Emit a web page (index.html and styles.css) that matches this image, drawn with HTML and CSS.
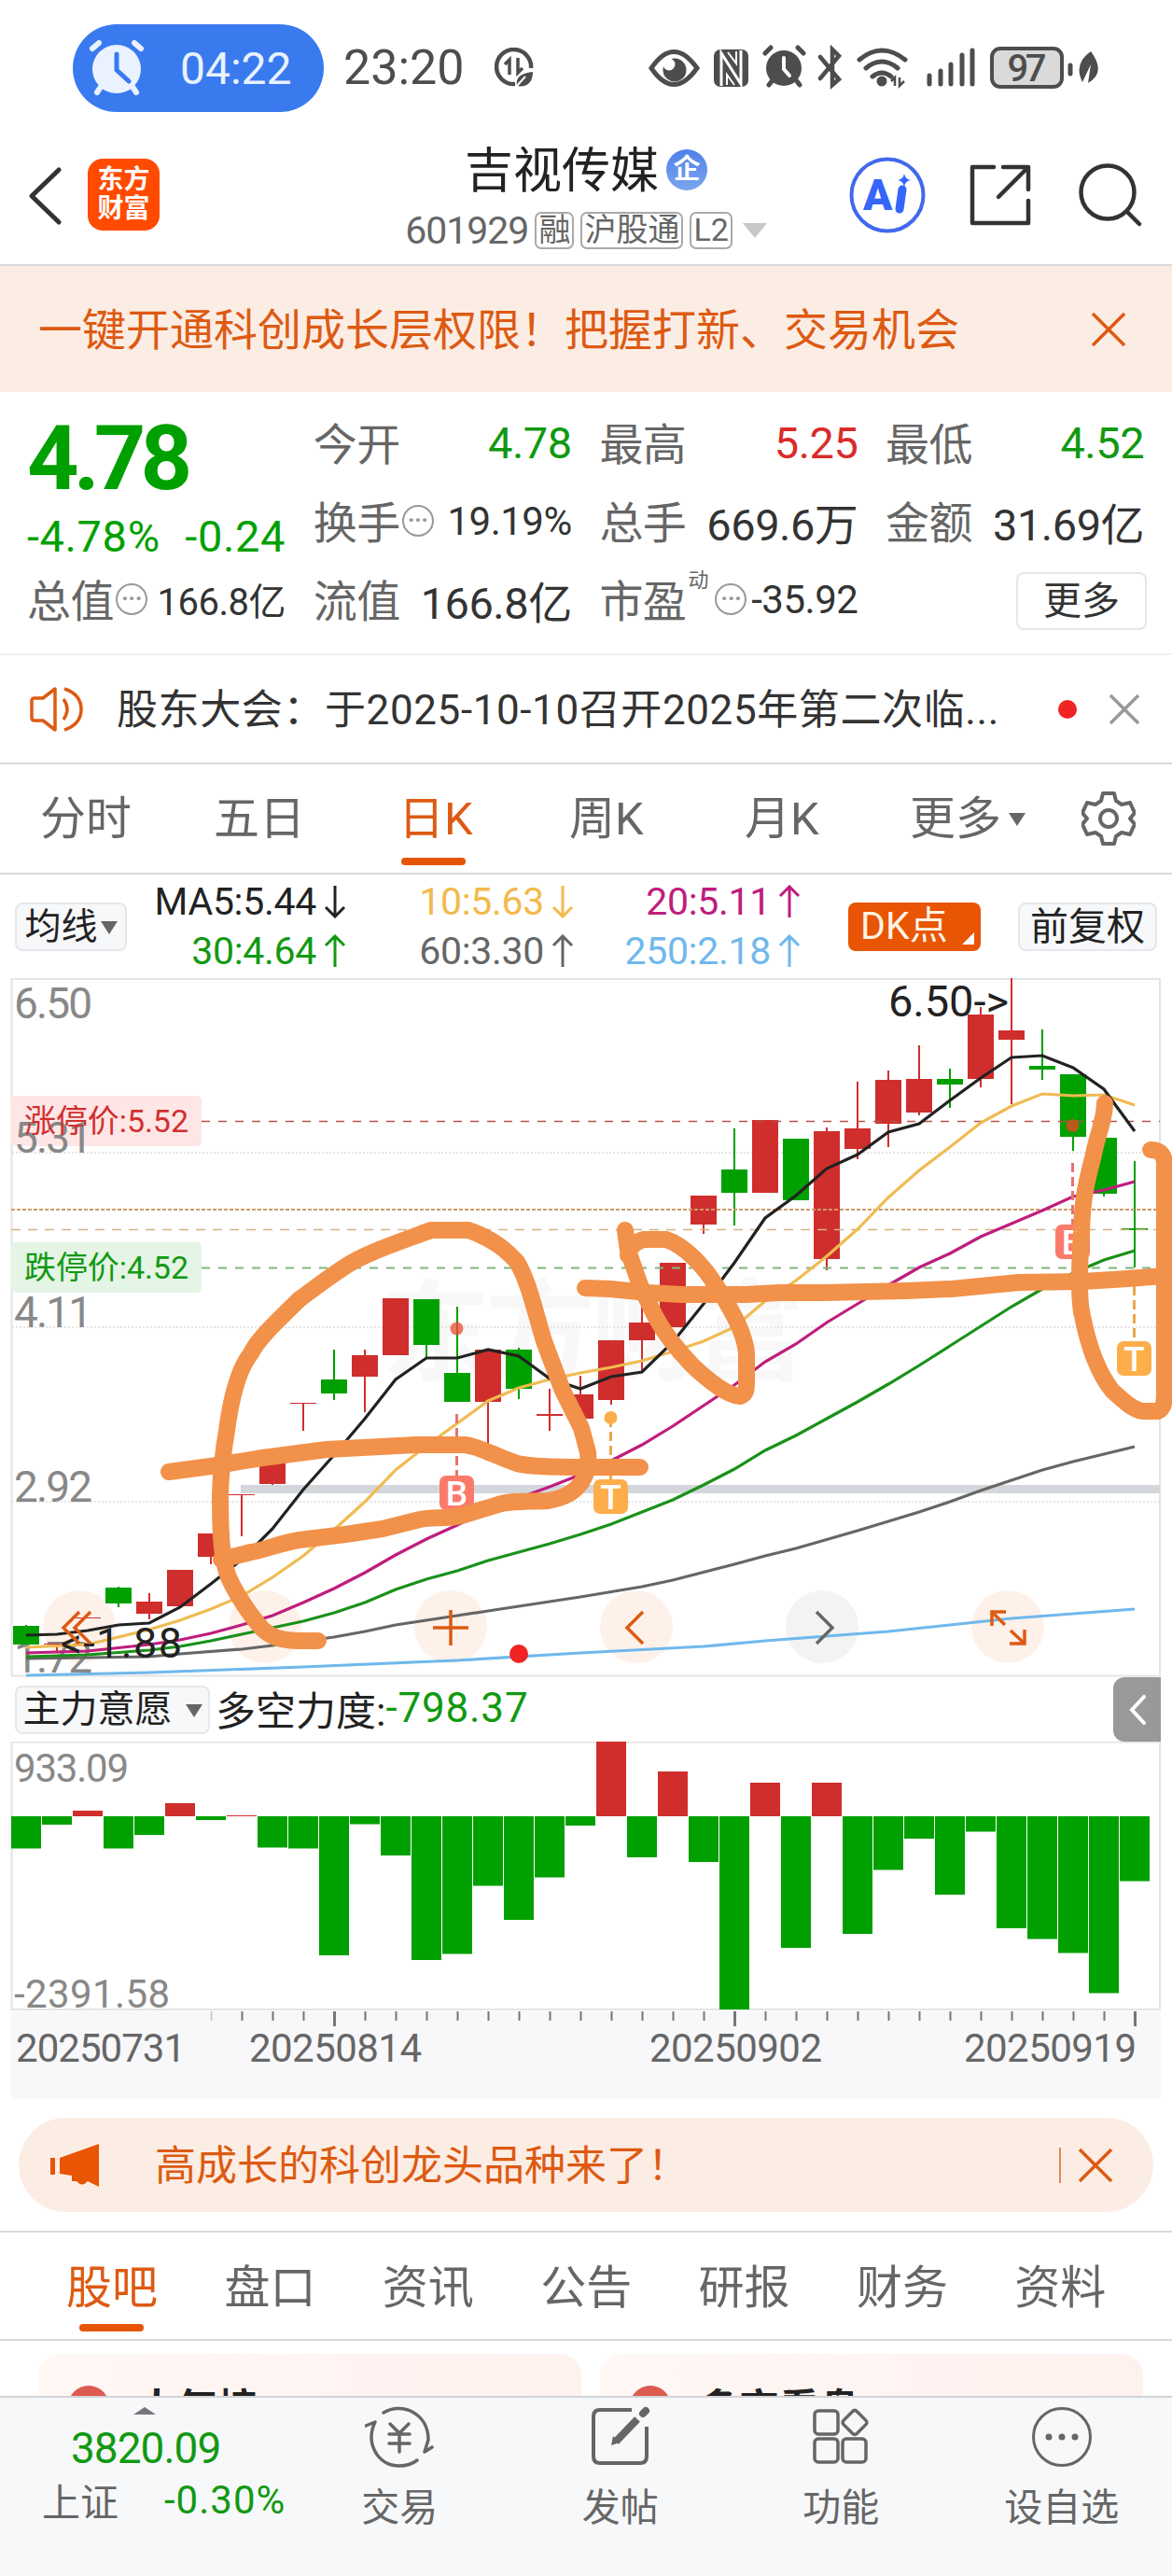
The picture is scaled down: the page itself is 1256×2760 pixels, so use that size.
FILE: index.html
```html
<!DOCTYPE html>
<html lang="zh-CN">
<head>
    <meta charset="UTF-8">
    <meta name="viewport" content="width=device-width, initial-scale=1.0">
    <title>吉视传媒 601929</title>
    <link rel="stylesheet" href="styles.css">
</head>
<body>
    <div class="status-bar">
        <div class="alarm-pill">
            <svg width="60" height="60" viewBox="0 0 60 60">
                <circle cx="30" cy="31" r="26" fill="#e9f2fe"/>
                <path d="M4 9l7-6M56 9l-7-6M9 56l4-6M51 56l-4-6" stroke="#e9f2fe" stroke-width="6" stroke-linecap="round"/>
                <path d="M30 15v17l13 12" fill="none" stroke="#397aef" stroke-width="5" stroke-linecap="round"/>
            </svg>
            <span>04:22</span>
        </div>
        <span class="clock">23:20</span>
        <svg class="saver" width="42" height="42" viewBox="0 0 42 42">
            <path d="M39 22A18.5 18.5 0 1 0 22 39" fill="none" stroke="#4d4d4d" stroke-width="4.5"/>
            <path d="M11 18l5-5v16M25 11v16l5-5" fill="none" stroke="#4d4d4d" stroke-width="3.500"/>
            <path d="M24 41c-2-10 6-14 17-15c0 12-7 17-17 15z" fill="#4d4d4d"/>
            <path d="M23 42l10-11" stroke="#fff" stroke-width="2"/>
        </svg>
        <svg class="sys-icons" width="490" height="50" viewBox="690 48 490 50">
            <g fill="none" stroke="#4d4d4d" stroke-width="5" stroke-linecap="round">
                <path d="M698 73Q722 38 747 73Q722 108 698 73z"/>
                <path d="M820 57l6-6M861 57l-6-6M824 91l3-4M857 91l-3-4"/>
                <path d="M879 61l20 24l-7 6V53l7 7l-20 24" stroke-width="4.5"/>
                <path d="M921 64q24-20 49 0M928 73q17-14 34 0M935 82q10-8 20 0"/>
                <path d="M996 90v-9M1008 90v-14M1019 90v-21M1031 90v-31M1042 90v-36"/>
                <path d="M1147 78v9" transform="translate(0 -8)"/>
            </g>
            <circle cx="723" cy="75" r="12.5" fill="#4d4d4d"/>
            <circle cx="717" cy="69" r="6.5" fill="#fff"/>
            <rect x="765" y="53" width="37" height="40" rx="7" fill="#4d4d4d"/>
            <path d="M773 92V57l21 33V54" fill="none" stroke="#fff" stroke-width="3"/>
            <path d="M780 56l9 12v-13M779 91V80l8 11" fill="none" stroke="#fff" stroke-width="2"/>
            <circle cx="840" cy="73" r="19" fill="#4d4d4d"/>
            <path d="M840 62v12l6 7" fill="none" stroke="#fff" stroke-width="4" stroke-linecap="round"/>
            <circle cx="945" cy="87" r="5.5" fill="#4d4d4d"/>
            <path d="M955 87l4-4v9M964 83v9l5-5" fill="none" stroke="#4d4d4d" stroke-width="2.5"/>
            <rect x="1063" y="52" width="75" height="41" rx="9" fill="#dadada" stroke="#4d4d4d" stroke-width="4"/>
            <text x="1100.500" y="87" font-size="40" font-weight="500" text-anchor="middle" textLength="42" fill="#4d4d4d">97</text>
            <path d="M1160 88q-10-20 9-33q17 23-3 34l3-20z" fill="#4d4d4d"/>
        </svg>
    </div>

    <header class="header">
        <svg class="back" width="36" height="62" viewBox="0 0 36 62"><path d="M33 3L4 31l29 28" fill="none" stroke="#333" stroke-width="5" stroke-linecap="round" stroke-linejoin="round"/></svg>
        <div class="logo"><span>东方</span><span>财富</span></div>
        <div class="title">
            <div class="name">吉视传媒<span class="corp">企</span></div>
            <div class="code"><span>601929</span><i>融</i><i>沪股通</i><i>L2</i><b class="tri"></b></div>
        </div>
        <svg class="ai" width="82" height="82" viewBox="0 0 82 82">
            <circle cx="41" cy="41" r="38.500" fill="none" stroke="#4168ee" stroke-width="4"/>
            <text x="15" y="57" font-size="46" font-weight="900" fill="#3565fa">A</text>
            <path d="M57 35l-3 21" stroke="#3565fa" stroke-width="9" stroke-linecap="round"/>
            <path d="M59 18q1 6 7 7q-6 1-7 7q-1-6-7-7q6-1 7-7z" fill="#3565fa"/>
        </svg>
        <svg class="share" width="66" height="66" viewBox="0 0 66 66">
            <path d="M26 3H3v60h60V39M36 3h27v24M61 5L31 35" fill="none" stroke="#333" stroke-width="4.500" stroke-linecap="round" stroke-linejoin="round"/>
        </svg>
        <svg class="search" width="68" height="68" viewBox="0 0 68 68">
            <circle cx="31" cy="31" r="28.500" fill="none" stroke="#333" stroke-width="4.500"/>
            <path d="M52 52l13 13" stroke="#333" stroke-width="4.500" stroke-linecap="round"/>
        </svg>
    </header>

    <div class="banner">
        <span>一键开通科创成长层权限！把握打新、交易机会</span>
        <svg width="38" height="38" viewBox="0 0 38 38"><path d="M2 2l34 34M36 2L2 36" stroke="#dd5a12" stroke-width="3.500"/></svg>
    </div>

    <section class="quote">
        <div class="price">
            <div class="now">4.78</div>
            <div class="change"><span>-4.78%</span><span>-0.24</span></div>
        </div>
        <div class="cell"><label>今开</label><span class="down">4.78</span></div>
        <div class="cell"><label>最高</label><span class="up">5.25</span></div>
        <div class="cell"><label>最低</label><span class="down">4.52</span></div>
        <div class="cell"><label>换手</label><i class="info">···</i><span class="small">19.19%</span></div>
        <div class="cell"><label>总手</label><span>669.6万</span></div>
        <div class="cell"><label>金额</label><span>31.69亿</span></div>
        <div class="cell"><label>总值</label><i class="info">···</i><span class="small cap">166.8亿</span></div>
        <div class="cell"><label>流值</label><span>166.8亿</span></div>
        <div class="cell"><label>市盈</label><sup>动</sup><i class="info">···</i><span class="small">-35.92</span></div>
        <div class="cell"><button class="more">更多</button></div>
    </section>

    <div class="notice">
        <svg width="60" height="50" viewBox="0 0 60 50">
            <g fill="none" stroke="#dd5a12" stroke-width="3.500" stroke-linejoin="round">
                <path d="M27 3v44L14 37H5q-3 0-3-3V16q0-3 3-3h9z"/>
                <path d="M36 14q8 11 0 22M37 3q18 6 18 22T37 47"/>
            </g>
        </svg>
        <span class="text">股东大会：于2025-10-10召开2025年第二次临...</span>
        <b class="dot"></b>
        <svg width="34" height="34" viewBox="0 0 34 34"><path d="M2 2l30 30M32 2L2 32" stroke="#999" stroke-width="3.500"/></svg>
    </div>

    <nav class="period-tabs">
        <span>分时</span><span>五日</span><span class="active">日K</span><span>周K</span><span>月K</span><span>更多<b class="tri"></b></span>
        <svg width="58" height="58" viewBox="0 0 58 58">
            <path d="M23 2h12l2 8l6 4l9-2l5 11l-5 6l5 6l-5 11l-9-2l-6 4l-2 8H23l-2-8l-6-4l-9 2l-5-11l5-6l-5-6l5-11l9 2l6-4z" fill="none" stroke="#666" stroke-width="4" stroke-linejoin="round"/>
            <circle cx="29" cy="29" r="9" fill="none" stroke="#666" stroke-width="4"/>
        </svg>
    </nav>

    <div class="ma-bar">
        <button class="chip ma-chip">均线<b class="tri"></b></button>
        <div class="ma-list">
            <span class="ma5">MA5:5.44<svg class="arrow" viewBox="0 0 24 36"><path d="M12 1v33M2 24l10 10l10-10"/></svg></span>
            <span class="ma10">10:5.63<svg class="arrow" viewBox="0 0 24 36"><path d="M12 1v33M2 24l10 10l10-10"/></svg></span>
            <span class="ma20">20:5.11<svg class="arrow" viewBox="0 0 24 36"><path d="M12 35V2M2 12L12 2l10 10"/></svg></span>
            <span class="ma30">30:4.64<svg class="arrow" viewBox="0 0 24 36"><path d="M12 35V2M2 12L12 2l10 10"/></svg></span>
            <span class="ma60">60:3.30<svg class="arrow" viewBox="0 0 24 36"><path d="M12 35V2M2 12L12 2l10 10"/></svg></span>
            <span class="ma250">250:2.18<svg class="arrow" viewBox="0 0 24 36"><path d="M12 35V2M2 12L12 2l10 10"/></svg></span>
        </div>
        <button class="chip dk">DK点</button>
        <button class="chip">前复权</button>
    </div>

    <svg class="k-chart" width="1256" height="749" viewBox="0 1048 1256 749">
        <text x="408" y="1470" class="watermark" textLength="455">东方财富</text>
        <path d="M12.500 1049H1243V1795.500H12.500z" fill="none" stroke="#e4e4e4" stroke-width="2"/>
        <path d="M13 1235H1243M13 1422H1243M13 1609H1243" stroke="#ddd" stroke-width="1.500" stroke-dasharray="2 2"/>
        <g fill="#fef1ea">
            <circle cx="85" cy="1743" r="39"/><circle cx="284" cy="1743" r="39"/><circle cx="483" cy="1743" r="39"/>
            <circle cx="682" cy="1743" r="39"/><circle cx="881" cy="1743" r="39" fill="#f3f3f3"/><circle cx="1080" cy="1743" r="39"/>
        </g>
        <rect x="258" y="1591" width="985" height="9" fill="#d3d7db"/>
        <rect x="12" y="1174" width="204" height="54" rx="5" fill="#fee6e6"/>
        <rect x="12" y="1331" width="204" height="54" rx="5" fill="#e4f4e5"/>
        <g class="axis-label">
            <text x="15" y="1091" textLength="84">6.50</text>
            <text x="15" y="1235" textLength="84">5.31</text>
            <text x="15" y="1422" textLength="84">4.11</text>
            <text x="15" y="1609" textLength="84">2.92</text>
            <text x="15" y="1792" textLength="84">1.72</text>
        </g>
        <text x="26" y="1213" font-size="34" textLength="176" fill="#d22f2f">涨停价:5.52</text>
        <text x="26" y="1370" font-size="34" textLength="176" fill="#119911">跌停价:4.52</text>
        <g id="candles"></g>
        <path d="M216 1201.500H1243" stroke="#b9504e" stroke-width="1.500" stroke-dasharray="9 9"/>
        <path d="M216 1358.500H1243" stroke="#7fb67f" stroke-width="1.800" stroke-dasharray="9 9"/>
        <path d="M12 1296H1243" stroke="#cd9a6c" stroke-width="2" stroke-dasharray="4 2"/>
        <path d="M12 1317.500H1243" stroke="#d9b184" stroke-width="1.500" stroke-dasharray="10 8"/>
        <g id="lines" fill="none" stroke-width="3.200"></g>
        <g fill="none" stroke-width="3" stroke-dasharray="10 5">
            <path d="M489.500 1515V1581M1149.500 1246V1312" stroke="#e5746c"/>
            <path d="M654.500 1519V1585M1215.500 1378V1436" stroke="#eba74a"/>
        </g>
        <circle cx="489.500" cy="1423.500" r="7" fill="#f04a36" opacity=".75"/>
        <circle cx="1149.500" cy="1206" r="7" fill="#b5591c"/>
        <circle cx="654.500" cy="1519" r="7" fill="#fcae4a"/>
        <g class="marks">
            <rect x="471" y="1581" width="37" height="37" rx="7" fill="#fb7b6b"/><text x="489.500" y="1613">B</text>
            <rect x="1131" y="1312" width="37" height="37" rx="7" fill="#fb7b6b"/><text x="1149.500" y="1344">B</text>
            <rect x="636" y="1585" width="37" height="37" rx="7" fill="#fdae4b"/><text x="654.500" y="1617">T</text>
            <rect x="1197" y="1437" width="37" height="37" rx="7" fill="#fdae4b"/><text x="1215.500" y="1469">T</text>
        </g>
        <text x="952" y="1089" font-size="47" textLength="129" fill="#222">6.50-&gt;</text>
        <text x="65" y="1776" font-size="45" textLength="130" fill="#222">&lt;-1.88</text>
        <g fill="none" stroke="#dd5a12" stroke-width="3.500">
            <path d="M85 1727L68 1744L85 1761M97 1727L80 1744L97 1761"/>
            <path d="M464 1744H502M483 1725V1763"/>
            <path d="M689 1727L672 1744L689 1761"/>
            <path d="M875 1727L892 1744L875 1761" stroke="#666"/>
            <path d="M1063 1742V1727H1078M1064 1728L1077 1741M1098 1746V1761H1082M1097 1760L1083 1747"/>
        </g>
        <circle cx="556" cy="1772" r="10" fill="#f12323"/>
        <!-- hand drawn marks -->
        <g class="pen">
            <path d="M341 1758H318C300 1757 290 1754 281 1745C270 1733 254 1710 245 1690C238 1672 236 1650 236 1600C237 1570 240 1550 243 1533C246 1510 253 1470 269 1450C275 1437 290 1422 321 1392C340 1378 350 1370 370 1357C390 1343 430 1330 462 1318H502C530 1328 543 1340 554 1352C566 1372 572 1400 583 1437L603 1490L623 1530L630 1556C632 1575 626 1602 587 1608C560 1609 545 1608 534 1612L498 1623C480 1628 465 1625 450 1628L410 1638L370 1644L321 1650C300 1653 280 1662 269 1663L237 1671"/>
            <path d="M181 1577L233 1570L281 1562L350 1553L446 1548H498C515 1550 530 1560 554 1568C565 1571 590 1572 628 1572H686"/>
            <path d="M627 1380L654 1381L694 1385L730 1387H799L835 1385H883L971 1383L1020 1381L1092 1374L1160 1373L1209 1370L1247 1367"/>
            <path d="M670 1318L673 1340L686 1377L702 1410C710 1425 720 1440 742 1463C760 1480 780 1495 793 1496C800 1494 800 1488 800 1480V1450C799 1435 789 1410 767 1377C755 1358 735 1335 714 1328H690C682 1330 674 1336 673 1345"/>
            <path d="M1184 1182C1184 1200 1176 1215 1172 1237C1165 1265 1160 1280 1159 1320C1157 1350 1155 1390 1160 1410C1164 1430 1172 1465 1192 1490C1205 1502 1215 1511 1225 1512H1241C1248 1509 1248 1500 1248 1490V1245C1247 1236 1242 1232 1233 1232"/>
        </g>
    </svg>

    <div class="sub-head">
        <button class="chip will">主力意愿<b class="tri"></b></button>
        <span class="force">多空力度:</span><span class="force-val">-798.37</span>
        <span class="fold"><svg width="20" height="32" viewBox="0 0 20 32"><path d="M17 2L4 16l13 14" fill="none" stroke="#fff" stroke-width="4" stroke-linecap="round"/></svg></span>
    </div>

    <svg class="vol-chart" width="1256" height="383" viewBox="0 1866 1256 383">
        <rect x="12" y="2155" width="1232" height="94" fill="#f8f8fb"/>
        <path d="M12.500 1866.500H1243V2153H12.500z" fill="none" stroke="#e4e4e4" stroke-width="2"/>
        <g id="bars"></g>
        <g class="vol-label">
            <text x="15" y="1909" textLength="123">933.09</text>
            <text x="15" y="2151" textLength="167">-2391.58</text>
        </g>
        <g class="date-label">
            <text x="17" y="2209" textLength="182">20250731</text>
            <text x="267" y="2209" textLength="185">20250814</text>
            <text x="696" y="2209" textLength="185">20250902</text>
            <text x="1033" y="2209" textLength="185">20250919</text>
        </g>
    </svg>

    <div class="promo">
        <svg width="53" height="46" viewBox="0 0 53 46"><path d="M0 15h5v18H0zM10 15L52 0v46L40 40q-6 7-12 0l-5 0v-6l-13-2z" fill="#e85505"/></svg>
        <span>高成长的科创龙头品种来了！</span>
        <svg class="close" width="38" height="38" viewBox="0 0 38 38"><path d="M2 2l34 34M36 2L2 36" stroke="#dd5a12" stroke-width="3.500"/></svg>
    </div>

    <nav class="info-tabs">
        <span class="active">股吧</span><span>盘口</span><span>资讯</span><span>公告</span><span>研报</span><span>财务</span><span>资料</span>
    </nav>

    <div class="cards">
        <div class="card"><b class="badge"></b>人气榜</div>
        <div class="card"><b class="badge"></b>多空看盘</div>
    </div>

    <footer class="bottom-nav">
        <div class="index">
            <b class="tri-up"></b>
            <div class="point">3820.09</div>
            <div class="row"><span>上证</span><span class="rate">-0.30%</span></div>
        </div>
        <div class="item">
            <svg width="74" height="66" viewBox="0 0 74 66">
                <g fill="none" stroke="#666" stroke-width="3.500" stroke-linecap="round" stroke-linejoin="round">
                    <path d="M20 7C40-5 68 8 68 36L64 49l8-5M1 21l10-4C0 40 14 64 37 64q11 0 19-6"/>
                    <path d="M27 19l10 10l10-10M26 30h22M26 40h22M37 29v20"/>
                </g>
            </svg>
            <span>交易</span>
        </div>
        <div class="item">
            <svg width="64" height="66" viewBox="0 0 64 66">
                <path d="M44 4H10Q3 4 3 11v43q0 7 7 7h43q7 0 7-7V22" fill="none" stroke="#666" stroke-width="4"/>
                <path d="M27 38L50 14" stroke="#666" stroke-width="8"/>
                <path d="M22 42l2-10l7 7z" fill="#666"/>
                <path d="M56 8l3-3" stroke="#666" stroke-width="8" stroke-linecap="round"/>
            </svg>
            <span>发帖</span>
        </div>
        <div class="item">
            <svg width="60" height="66" viewBox="0 0 60 66">
                <g fill="none" stroke="#666" stroke-width="3.500">
                    <rect x="2" y="5" width="25" height="25" rx="4"/><rect x="2" y="35" width="25" height="25" rx="4"/><rect x="32" y="35" width="25" height="25" rx="4"/>
                    <rect x="35" y="7.500" width="20" height="20" rx="3" transform="rotate(45 45 17.500)"/>
                </g>
            </svg>
            <span>功能</span>
        </div>
        <div class="item">
            <svg width="66" height="66" viewBox="0 0 66 66">
                <circle cx="33" cy="33" r="30.500" fill="none" stroke="#666" stroke-width="3"/>
                <g fill="#666"><circle cx="19" cy="33" r="3.500"/><circle cx="33" cy="33" r="3.500"/><circle cx="47" cy="33" r="3.500"/></g>
            </svg>
            <span>设自选</span>
        </div>
    </footer>

    <script src="chart.js"></script>
</body>
</html>
```

FILE: styles.css
```css
* {
    box-sizing: border-box;
}
body {
    margin: 0;
    width: 1256px;
    height: 2760px;
    overflow: hidden;
    background: #fff;
    color: #333;
    font-family: Roboto, "Noto Sans CJK SC", sans-serif;
}
svg {
    display: block;
    flex: none;
}
svg text {
    font-family: Roboto, "Noto Sans CJK SC", sans-serif;
}
button {
    font-family: inherit;
    padding: 0;
}
i {
    font-style: normal;
}
.tri {
    display: inline-block;
    border: 9px solid transparent;
    border-top: 14px solid #666;
    border-bottom: 0;
}

/* status bar */
.status-bar {
    height: 136px;
    padding: 26px 76px 16px 78px;
    display: flex;
    align-items: flex-start;
}
.alarm-pill {
    width: 269px;
    height: 94px;
    border-radius: 47px;
    background: #397aef;
    color: #e9f2fe;
    display: flex;
    align-items: center;
    padding-left: 17px;
    font-size: 48px;
}
.alarm-pill span {
    margin-left: 38px;
}
.clock {
    margin-left: 21px;
    line-height: 94px;
    font-size: 52px;
    color: #4d4d4d;
}
.saver {
    margin: 25px 0 0 32px;
}
.sys-icons {
    margin: 22px 0 0 auto;
}

/* header */
.header {
    height: 149px;
    padding-left: 30px;
    display: flex;
    align-items: flex-start;
    border-bottom: 2px solid #d9d9dc;
}
.back {
    margin-top: 43px;
}
.logo {
    width: 77px;
    height: 77px;
    margin: 34px 0 0 28px;
    border-radius: 16px;
    background: #ff4a00;
    color: #fff;
    font-size: 28px;
    font-weight: 700;
    line-height: 31px;
    padding-top: 7px;
    text-align: center;
}
.logo span {
    display: block;
}
.title {
    width: 400px;
    margin-left: 257px;
}
.name {
    height: 85px;
    display: flex;
    align-items: center;
    justify-content: center;
    gap: 8px;
    font-size: 52px;
    color: #222;
    white-space: nowrap;
}
.corp {
    width: 44px;
    height: 44px;
    margin-top: 6px;
    border-radius: 50%;
    background: linear-gradient(#4f80e8, #7ba6ee);
    color: #fff;
    font-size: 29px;
    font-weight: 700;
    line-height: 42px;
    text-align: center;
}
.code {
    height: 52px;
    display: flex;
    align-items: center;
    justify-content: center;
    gap: 7px;
    font-size: 41px;
    color: #666;
    letter-spacing: -1px;
}
.code i {
    height: 40px;
    padding: 0 2px;
    border: 2px solid #aaa;
    border-radius: 7px;
    font-size: 34px;
    line-height: 35px;
    letter-spacing: 0;
}
.code .tri {
    margin-left: 4px;
    border-width: 16px 13px 0;
    border-top-color: #c8c8c8;
}
.ai {
    margin: 32px 0 0 82px;
}
.share {
    margin: 40px 0 0 47px;
}
.search {
    margin: 39px 0 0 51px;
}

/* permission banner */
.banner {
    height: 135px;
    padding: 0 49px 0 41px;
    display: flex;
    align-items: center;
    justify-content: space-between;
    background: #fcede4;
    color: #dd5a12;
    font-size: 47px;
    white-space: nowrap;
}
.banner span {
    margin-top: -6px;
}

/* quote grid */
.quote {
    height: 280px;
    padding: 12px 30px 0 29px;
    display: grid;
    grid-template-columns: repeat(4, 277px);
    grid-template-rows: repeat(3, 84px);
    column-gap: 29.7px;
    font-size: 47px;
}
.price {
    grid-row: span 2;
    padding-top: 2px;
    color: #00a000;
}
.now {
    height: 112px;
    line-height: 114px;
    font-size: 97px;
    font-weight: 700;
    letter-spacing: -6px;
}
.change {
    display: flex;
    justify-content: space-between;
    line-height: 58px;
    font-size: 47px;
    letter-spacing: 0.6px;
}
.cell {
    position: relative;
    display: flex;
    align-items: center;
    white-space: nowrap;
    letter-spacing: -0.5px;
}
.cell label {
    color: #666;
    margin-top: -3px;
}
.cell span {
    margin-left: auto;
}
.cell .small {
    font-size: 42px;
}
.cell .cap {
    font-size: 40px;
}
.cell .down {
    color: #119911;
}
.up {
    color: #d82c2c;
}
.info {
    width: 34px;
    height: 34px;
    margin-left: 2px;
    border: 2px solid #999;
    border-radius: 50%;
    color: #999;
    font-size: 26px;
    font-weight: 700;
    line-height: 28px;
    text-align: center;
}
.cell sup {
    width: 24px;
    margin: 0 3px 0 2px;
    align-self: flex-start;
    font-size: 22px;
    line-height: 24px;
    padding-top: 10px;
    color: #666;
}
.more {
    width: 140px;
    height: 62px;
    margin: 3px -3px 0 auto;
    border: 2px solid #e6e6e6;
    border-radius: 8px;
    background: #fff;
    color: #333;
    font-size: 41px;
    line-height: 54px;
}

/* notice */
.notice {
    height: 119px;
    padding: 0 34px 0 32px;
    display: flex;
    align-items: center;
    border-top: 2px solid #efefef;
    border-bottom: 2px solid #d9d9d9;
}
.notice .text {
    margin: -5px 0 0 33px;
    width: 1009px;
    font-size: 44px;
    letter-spacing: 0.6px;
    white-space: nowrap;
}
.dot {
    width: 20px;
    height: 20px;
    border-radius: 50%;
    background: #f12323;
    margin-right: auto;
}

/* tabs */
.period-tabs {
    height: 118px;
    padding: 0 39px 0 43px;
    display: flex;
    align-items: center;
    border-bottom: 2px solid #d9d9d9;
    font-size: 49px;
    color: #666;
}
.period-tabs span {
    position: relative;
    width: 186px;
    height: 116px;
    line-height: 118px;
    white-space: nowrap;
}
.period-tabs span:nth-child(3) {
    width: 181px;
    padding-left: 13px;
    margin-right: -1px;
}
.period-tabs span:nth-child(2) {
    width: 185px;
}
.period-tabs span:nth-child(4) {
    padding-left: 16px;
    width: 188px;
}
.period-tabs span:nth-child(5) {
    padding-left: 16px;
}
.period-tabs span:nth-child(6) {
    padding-left: 7px;
}
.period-tabs svg {
    margin-left: auto;
}
.period-tabs .tri {
    margin: 0 0 9px 8px;
}
.period-tabs .active, .info-tabs .active {
    color: #dd5a12;
}
.active::after {
    content: "";
    position: absolute;
    left: 16px;
    bottom: 8px;
    width: 69px;
    height: 8px;
    border-radius: 4px;
    background: #e65505;
}

/* moving averages */
.ma-bar {
    height: 111px;
    padding: 0 16px;
    display: flex;
    align-items: center;
}
.chip {
    flex: none;
    height: 52px;
    width: 149px;
    border: 2px solid #e6e7ea;
    border-radius: 8px;
    background: #f7f8fa;
    color: #222;
    font-size: 41px;
    line-height: 44px;
    white-space: nowrap;
}
.ma-chip {
    width: 120px;
    font-size: 39px;
}
.ma-chip .tri {
    margin: 0 0 5px 3px;
}
.ma-list {
    display: grid;
    grid-template-columns: 235px 244px 243px;
    grid-template-rows: 53px 53px;
    font-size: 41px;
    letter-spacing: -0.3px;
    padding-bottom: 1px;
}
.ma-list span {
    display: flex;
    align-items: center;
    justify-content: flex-end;
    gap: 8px;
}
.arrow {
    width: 24px;
    height: 36px;
    fill: none;
    stroke: currentColor;
    stroke-width: 3;
}
.ma5 { color: #222; }
.ma10 { color: #f3b94b; }
.ma20 { color: #bf1d7d; }
.ma30 { color: #119911; }
.ma60 { color: #666; }
.ma250 { color: #70b8ec; }
.dk {
    position: relative;
    width: 142px;
    margin: 0 40px 0 51px;
    border: 0;
    background: #e85505;
    color: #fff3e2;
    text-align: left;
    padding-left: 13px;
    line-height: 47px;
}
.dk::after {
    content: "";
    position: absolute;
    right: 7px;
    bottom: 7px;
    border-left: 13px solid transparent;
    border-bottom: 13px solid #fff;
}

/* charts */
.watermark {
    font-size: 118px;
    font-weight: 700;
    fill: #f8f8f8;
}
.axis-label {
    font-size: 46px;
    fill: #888;
}
.vol-label {
    font-size: 42px;
    fill: #888;
}
.date-label {
    font-size: 42px;
    fill: #666;
}
.marks text {
    font-size: 37px;
    font-weight: 500;
    fill: #fff;
    text-anchor: middle;
}
.pen {
    fill: none;
    stroke: #f2914a;
    stroke-width: 18;
    stroke-linecap: round;
    stroke-linejoin: round;
}
.sub-head {
    height: 69px;
    padding: 0 12px 0 16px;
    display: flex;
    align-items: center;
    font-size: 43px;
}
.will {
    width: 209px;
    font-size: 40px;
}
.will .tri {
    margin: 0 0 5px 14px;
}
.force {
    margin: -4px 0 0 6px;
    color: #222;
}
.force-val {
    color: #119911;
    letter-spacing: 0.8px;
    font-size: 44px;
    margin-top: -3px;
}
.fold {
    width: 51px;
    height: 69px;
    margin-left: auto;
    border-radius: 12px 0 0 12px;
    background: #999;
    display: flex;
    align-items: center;
    justify-content: center;
}

/* promo */
.promo {
    height: 101px;
    margin: 20px 20px 20px;
    padding: 0 43px 0 34px;
    border-radius: 51px;
    background: #fcede4;
    color: #dd5a12;
    font-size: 44px;
    display: flex;
    align-items: center;
}
.promo span {
    margin: -5px 0 0 59px;
}
.promo .close {
    box-sizing: content-box;
    margin-left: auto;
    padding-left: 18px;
    border-left: 2px solid #dd8a5a;
}
.info-tabs {
    height: 118px;
    padding: 0 71px;
    border-top: 2px solid #d9d9d9;
    border-bottom: 2px solid #d9d9d9;
    display: flex;
    font-size: 49px;
    color: #666;
}
.info-tabs span {
    position: relative;
    flex: 0 0 169.4px;
    line-height: 119px;
}
.info-tabs .active::after {
    left: 14px;
}

.cards {
    height: 59px;
    padding: 14px 31px 0 41px;
    display: flex;
    gap: 20px;
    overflow: hidden;
}
.card {
    width: 582px;
    height: 130px;
    padding: 34px 0 0 32px;
    border-radius: 24px;
    background: linear-gradient(90deg, #fff8f5, #fef1ee);
    color: #222;
    display: flex;
    align-items: flex-start;
    font-size: 43px;
    font-weight: 700;
    line-height: 50px;
}
.badge {
    width: 44px;
    height: 44px;
    margin: 0 30px 0 0;
    border-radius: 50%;
    background: #dc5a50;
}

/* bottom nav */
.bottom-nav {
    height: 194px;
    border-top: 2px solid #d2d3d8;
    background: #f7f8fa;
    display: flex;
    color: #666;
    font-size: 41px;
}
.index {
    width: 310px;
    padding-top: 10px;
}
.tri-up {
    display: block;
    width: 0;
    margin-left: 143px;
    border: 12px solid transparent;
    border-top: 0;
    border-bottom: 8px solid #77777b;
}
.point {
    padding-left: 76px;
    font-size: 46px;
    line-height: 54px;
    margin-top: 9px;
    color: #119911;
    letter-spacing: -1px;
}
.row {
    display: flex;
    align-items: center;
    height: 56px;
    padding-left: 45px;
}
.rate {
    margin-left: 49px;
    font-size: 42px;
    letter-spacing: 1px;
    color: #119911;
}
.item {
    flex: 0 0 236.500px;
    display: flex;
    flex-direction: column;
    align-items: center;
    padding-top: 9px;
}
.item span {
    margin-top: 13px;
    line-height: 60px;
}
```

FILE: chart.js
```js
// [up, high, open/close top, open/close bottom, low]
const candles = [
    [0, 1741, 1742, 1762, 1762], [1, 1761, 1761, 1762, 1770], [1, 1733, 1733, 1734, 1734], [0, 1700, 1701, 1718, 1722],
    [1, 1707, 1716, 1729, 1735], [1, 1682, 1682, 1721, 1721], [1, 1643, 1643, 1668, 1676], [1, 1601, 1601, 1602, 1646],
    [1, 1565, 1565, 1590, 1591], [1, 1503, 1503, 1504, 1533], [0, 1446, 1478, 1493, 1500], [1, 1446, 1452, 1475, 1513],
    [1, 1391, 1391, 1452, 1452], [0, 1392, 1392, 1441, 1455], [0, 1400, 1471, 1502, 1502], [1, 1446, 1446, 1502, 1547],
    [0, 1444, 1446, 1488, 1499], [1, 1488, 1515, 1517, 1533], [1, 1474, 1494, 1520, 1520], [1, 1436, 1436, 1500, 1505],
    [1, 1398, 1417, 1436, 1470], [1, 1353, 1353, 1422, 1422], [1, 1281, 1281, 1312, 1322], [0, 1209, 1253, 1278, 1313],
    [1, 1200, 1200, 1278, 1278], [0, 1220, 1220, 1286, 1286], [1, 1208, 1212, 1349, 1361], [1, 1159, 1209, 1231, 1242],
    [1, 1147, 1157, 1204, 1229], [1, 1120, 1156, 1192, 1195], [0, 1145, 1156, 1162, 1187], [1, 1079, 1087, 1156, 1165],
    [1, 1048, 1104, 1114, 1183], [0, 1103, 1142, 1146, 1157], [0, 1151, 1151, 1218, 1233], [0, 1218, 1219, 1279, 1282],
    [0, 1244, 1316, 1318, 1358]
];

const averages = {
    '#70b8ec': '28,1795 160,1792 325,1786 490,1779 622,1771 754,1764 820,1758 886,1753 952,1748 1018,1741 1084,1734 1150,1729 1216,1724',
    '#666': '28,1777 94,1776 160,1775 193,1772 259,1767 292,1763 358,1754 391,1748 424,1741 490,1731 523,1726 589,1716 622,1711 688,1700 721,1693 787,1676 820,1667 853,1659 919,1640 985,1620 1018,1609 1051,1597 1084,1586 1117,1575 1150,1566 1216,1550',
    '#1a911a': '28,1775 94,1773 160,1768 193,1764 226,1758 259,1751 292,1744 325,1737 358,1728 391,1717 424,1703 457,1692 490,1683 523,1672 556,1663 589,1654 622,1644 655,1633 688,1620 721,1607 754,1591 787,1574 820,1554 853,1538 886,1520 919,1502 952,1483 985,1463 1018,1442 1051,1421 1084,1400 1117,1381 1150,1364 1183,1350 1216,1340',
    '#bf1d7d': '28,1771 94,1769 160,1762 193,1757 226,1750 259,1741 292,1731 325,1717 358,1702 391,1685 424,1666 457,1649 490,1634 523,1618 556,1605 589,1593 622,1580 655,1565 688,1548 721,1528 754,1506 787,1484 820,1459 853,1440 886,1417 919,1397 952,1377 985,1358 1018,1343 1051,1325 1084,1311 1117,1297 1150,1282 1183,1275 1216,1266',
    '#f0bb51': '28,1765 94,1762 127,1754 160,1746 193,1736 226,1724 259,1710 292,1690 325,1667 358,1639 391,1609 424,1575 457,1549 490,1525 523,1501 556,1487 589,1478 622,1471 655,1465 688,1458 721,1448 754,1437 787,1422 820,1394 853,1372 886,1346 919,1317 952,1283 985,1254 1018,1229 1051,1203 1084,1185 1117,1172 1150,1174 1183,1173 1216,1184',
    '#222': '28,1752 61,1751 94,1747 127,1741 160,1739 193,1722 226,1697 259,1671 292,1638 325,1596 358,1559 391,1520 424,1478 457,1455 490,1455 523,1446 556,1453 589,1477 622,1488 655,1475 688,1470 721,1438 754,1397 787,1353 820,1305 853,1281 886,1252 919,1237 952,1213 985,1204 1018,1179 1051,1155 1084,1133 1117,1131 1150,1144 1183,1167 1216,1212'
};

// y of each bar's end, zero line is at 1946
const ends = [
    1980.500, 1955, 1940, 1980.500, 1966, 1932, 1950, 1945, 1979.500, 1980.500, 2095, 1954.500, 1988, 2100, 2093.500, 2020.500, 2057, 2011.500, 1956,
    1866, 1990, 1898, 1995, 2153, 1910, 2087, 1910, 2072, 2003.500, 1970, 2030, 1962.500, 2066, 2077.500, 2092.500, 2135.500, 2015.500
];

const red = '#cf2e2c';
const green = '#00a000';
const x = i => 28 + i * 33;

document.getElementById('candles').innerHTML = candles.map(([up, high, top, bottom, low], i) => {
    const color = up ? red : green;
    return `<path d="M${x(i)} ${high}V${low}" stroke="${color}" stroke-width="2"/>` +
        `<rect x="${x(i) - 14}" y="${top}" width="28" height="${bottom - top}" fill="${color}"/>`;
}).join('');

document.getElementById('lines').innerHTML = Object.entries(averages)
    .map(([color, points]) => `<polyline points="${points}" stroke="${color}"/>`).join('');

let bars = '';
ends.forEach((end, i) => {
    const up = end < 1946;
    bars += `<rect x="${x(i) - 16}" y="${Math.min(end, 1946)}" width="32" height="${Math.abs(end - 1946)}" fill="${up ? red : green}"/>`;
    if (i >= 6) {
        const big = [10, 23, 36].includes(i);
        bars += `<path d="M${x(i) + 0.5} 2155v${big ? 16 : 10}" stroke="${i === 6 ? '#ccc' : '#777'}" stroke-width="${big ? 3 : 2}"/>`;
    }
});
document.getElementById('bars').innerHTML = bars;
```
